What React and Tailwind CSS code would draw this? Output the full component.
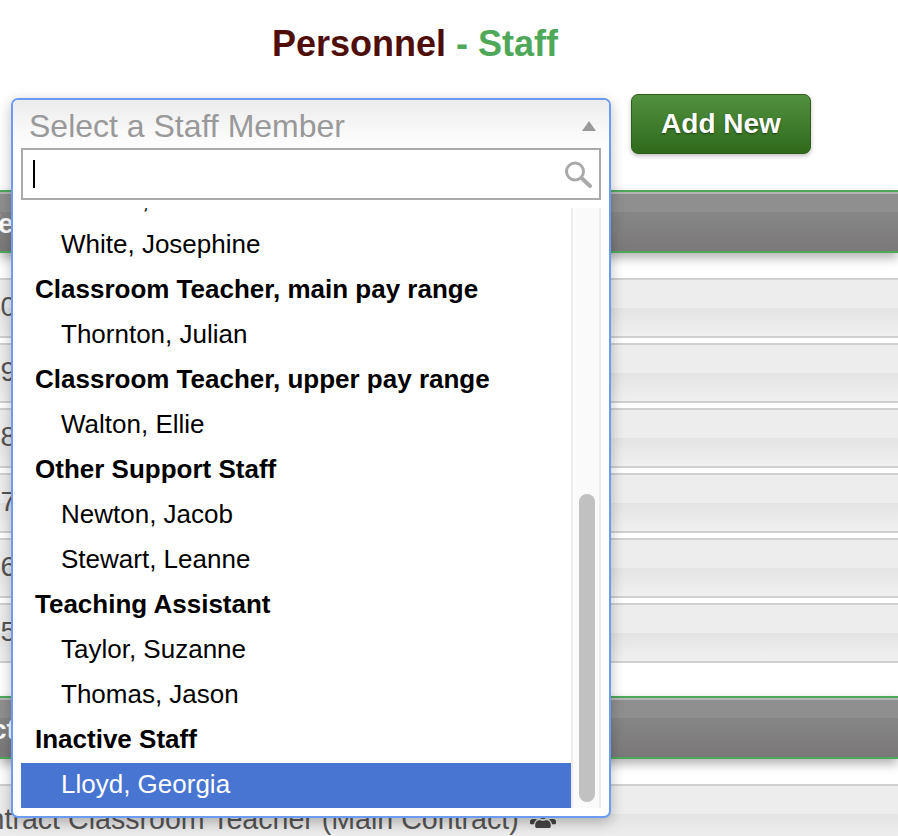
import React from 'react'
import { FaUsers } from 'react-icons/fa'

const rows = ['10', '09', '08', '07', '06', '05']

const options = [
  { label: 'White, Josephine' },
  { label: 'Classroom Teacher, main pay range', group: true },
  { label: 'Thornton, Julian' },
  { label: 'Classroom Teacher, upper pay range', group: true },
  { label: 'Walton, Ellie' },
  { label: 'Other Support Staff', group: true },
  { label: 'Newton, Jacob' },
  { label: 'Stewart, Leanne' },
  { label: 'Teaching Assistant', group: true },
  { label: 'Taylor, Suzanne' },
  { label: 'Thomas, Jason' },
  { label: 'Inactive Staff', group: true },
  { label: 'Lloyd, Georgia', active: true },
]

const SectionBar = ({ label, className = '' }) => (
  <div className={`h-[63px] border-y-2 border-[#4fa75a] shadow-[0_5px_10px_rgba(0,0,0,0.3)] overflow-hidden ${className}`}>
    <div className="h-[20px] border-t-2 border-[#b5b5b5] bg-[#8f8f8f]" />
    <div className="h-[39px] bg-gradient-to-b from-[#878686] to-[#7a7878] flex items-center">
      <span className="-mt-[15px] text-[28px] font-bold text-white whitespace-nowrap">{label}</span>
    </div>
  </div>
)

const Row = ({ children, className = '' }) => (
  <div className={`h-[60px] border-y-2 border-[#d0d0d0] bg-[#ededed] relative overflow-hidden ${className}`}>
    <div className="absolute inset-x-0 top-[28px] bottom-0 bg-gradient-to-b from-[#e4e4e4] to-[#f0f0f0]" />
    <div className="relative h-full flex items-center text-[28px] text-[#555] whitespace-nowrap">{children}</div>
  </div>
)

const StaffSelect = () => (
  <div className="absolute left-0 top-0 z-10 w-[600px] h-[720px] bg-white border-2 border-[#6b9bf2] rounded-[7px] shadow-[0_4px_14px_rgba(0,0,0,0.25)] flex flex-col overflow-hidden">
    <div className="h-[48px] shrink-0 bg-gradient-to-b from-[#ececec] to-white flex items-center justify-between pl-[16px] pr-[13px]">
      <span className="text-[32px] text-[#999] leading-none mt-[3px]">Select a Staff Member</span>
      <svg width="14" height="10" viewBox="0 0 14 10" className="mt-[3px]">
        <path d="M7 0 L14 10 L0 10 Z" fill="#999" />
      </svg>
    </div>
    <div className="mx-[8px] h-[52px] shrink-0 border-2 border-[#aaa] bg-white flex items-center justify-between pl-[10px] pr-[7px]">
      <div className="w-[2px] h-[28px] bg-black" />
      <svg width="28" height="27" viewBox="0 0 28 27" fill="none" stroke="#aaa" className="mt-[1px]">
        <circle cx="11" cy="10.5" r="8.5" strokeWidth="3" />
        <path d="M17.5 17 L26 25" strokeWidth="4" strokeLinecap="round" />
      </svg>
    </div>
    <div className="mx-[8px] mt-[8px] h-[600px] flex overflow-hidden">
      <div className="flex-1 min-w-0 overflow-hidden">
        <div className="-mt-[30px]">
          <div className="h-[45px] pl-[40px] pb-[2px] flex items-center text-[26px] text-black">Mullins, Adam</div>
          {options.map((o) => (
            <div
              key={o.label}
              className={`h-[45px] pb-[2px] flex items-center text-[26px] ${o.group ? 'pl-[14px] font-bold text-black' : 'pl-[40px]'} ${o.active ? 'bg-[#4875d1] text-white' : ''} ${!o.group && !o.active ? 'text-black' : ''}`}
            >
              {o.label}
            </div>
          ))}
        </div>
      </div>
      <div className="w-[30px] shrink-0 bg-[#fafafa] border-x-2 border-x-[#ececec] pl-[6px] pr-[4px] pt-[286px] pb-[6px]">
        <div className="h-full w-[16px] rounded-[8px] bg-[#c1c1c1]" />
      </div>
    </div>
  </div>
)

export default function App() {
  return (
    <div className="w-[898px] h-[836px] overflow-hidden bg-white font-['Liberation_Sans',Arial,sans-serif]">
      <h1 className="pt-[22px] pr-[68px] text-center text-[36px] leading-[44px] font-bold text-[#4f0f08]">
        Personnel <span className="text-[#4fa75a]">- Staff</span>
      </h1>

      <div className="flex items-start mt-[32px] pl-[11px] gap-[20px] h-[92px]">
        <div className="relative w-[600px] h-[56px]">
          <StaffSelect />
        </div>
        <button className="-mt-[4px] w-[180px] h-[60px] rounded-[7px] border border-[#2f5e1c] bg-gradient-to-b from-[#52913f] to-[#2f6a1b] text-[28px] font-bold text-white [text-shadow:0_1px_2px_rgba(0,0,0,0.5)] shadow-[0_2px_4px_rgba(0,0,0,0.25)]">
          Add New
        </button>
      </div>

      <SectionBar label={<span className="-ml-[17px] block">Te</span>} />

      <div className="mt-[25px] flex flex-col gap-[5px]">
        {rows.map((r) => (
          <Row key={r}><span className="-ml-[15px] -mt-[2px]">{r}</span></Row>
        ))}
      </div>

      <SectionBar label={<span className="-ml-[9px] block">ct</span>} className="mt-[33px]" />

      <Row className="mt-[25px]">
        <span className="-ml-[48px] mt-[10px] text-[28.6px]">Contract Classroom Teacher (Main Contract)</span>
        <FaUsers className="ml-[11px] mt-[10px] text-[#444] text-[26px]" />
      </Row>
    </div>
  )
}
